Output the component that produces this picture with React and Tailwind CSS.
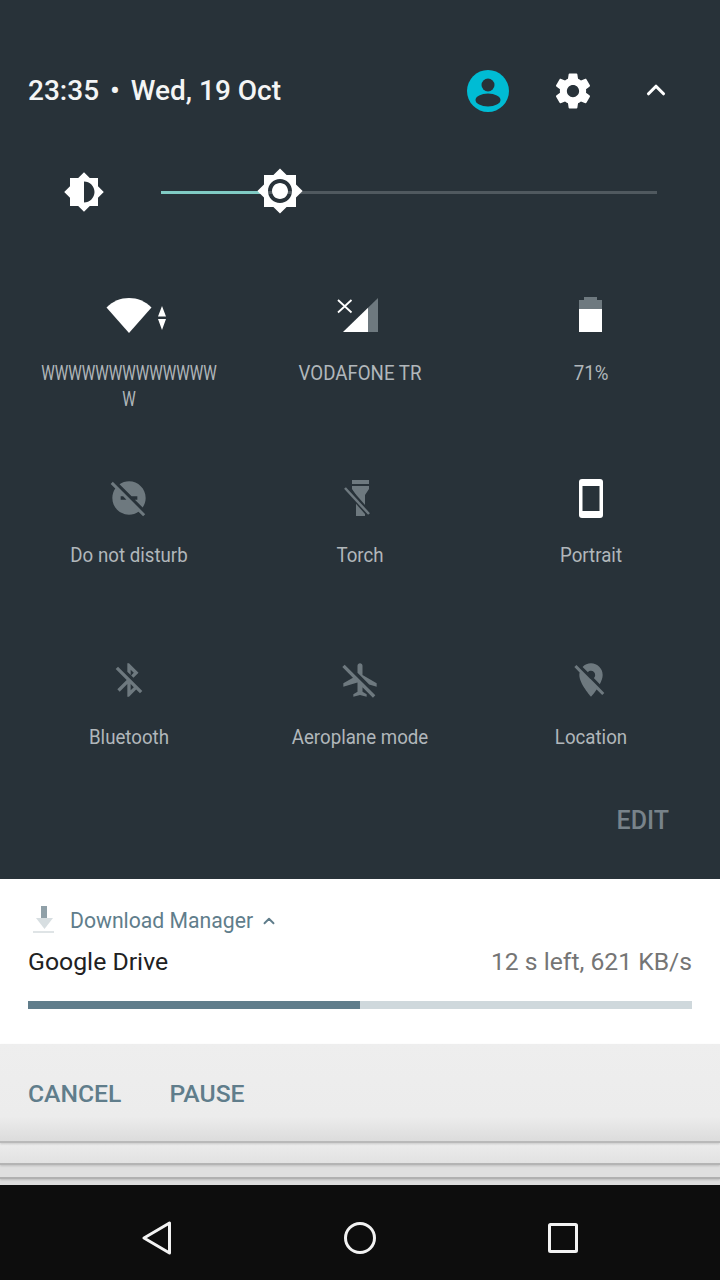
import { ChevronUp } from 'lucide-react';

const MUTED = '#6e797f';
const BG = '#283239';

function Tile({ icon, label, labelClass = 'w-[200px] scale-x-[0.89]' }) {
  return (
    <div className="flex flex-col items-center">
      <div className="h-[48px] w-[48px] flex items-center justify-center">{icon}</div>
      <p className={`mt-[20px] shrink-0 text-center text-[21px] leading-[26px] text-[#b1b7bb] break-all ${labelClass}`}>{label}</p>
    </div>
  );
}

const WifiIcon = () => (
  <div className="relative -mt-[2px]">
    <svg width="46" height="36" viewBox="0 0 46 36"><path d="M0.5 10.5C7 4 14.5 1 23 1s16 3 22.5 9.5L23 36z" fill="#fff" /></svg>
    <svg className="absolute left-[51px] top-[9px]" width="10" height="24" viewBox="0 0 10 24" fill="#fff"><path d="M5 0l4 10.5H1zM1 13h8L5 24z" /></svg>
  </div>
);

const SignalIcon = () => (
  <svg className="-mt-[2px] -ml-[4px] shrink-0" width="42" height="36" viewBox="0 0 42 36">
    <path d="M31 10.700L41 1v34H31z" fill="#6e797f" />
    <path d="M31 10.700V35H6z" fill="#fff" />
    <path d="M1 3L14.500 15.500M14.500 3L1 15.500" stroke="#fff" strokeWidth="1.800" />
  </svg>
);

const BatteryIcon = () => (
  <svg className="-mt-[2px]" width="23" height="36" viewBox="0 0 23 36">
    <path d="M5 0h13v3h5v9H0V3h5z" fill="#6e797f" />
    <path d="M0 12h23v23H0z" fill="#fff" />
  </svg>
);

const PortraitIcon = () => (
  <svg width="24" height="39" viewBox="0 0 24 39">
    <rect x="0" y="0" width="24" height="39" rx="3" fill="#fff" />
    <rect x="3.500" y="7" width="17" height="25" fill={BG} />
  </svg>
);

const TorchIcon = () => (
  <svg width="36" height="36" viewBox="0 0 36 36">
    <path d="M10 0h17v4H10zM10 6h17v3l-4 6v21h-9V15l-4-6z" fill={MUTED} />
    <path d="M5 9l22 25" stroke={BG} strokeWidth="6" />
    <path d="M3 8l24 26" stroke={MUTED} strokeWidth="2.500" />
  </svg>
);

const MatIcon = ({ d, size = 40, fill = MUTED }) => (
  <svg width={size} height={size} viewBox="0 0 24 24" fill={fill}><path d={d} /></svg>
);

const DND = 'M17 11v2h-1.46l4.68 4.68C21.34 16.07 22 14.11 22 12c0-5.52-4.48-10-10-10-2.11 0-4.07.66-5.68 1.78L13.54 11H17zM2.27 2.27L1 3.54l2.78 2.78C2.66 7.93 2 9.89 2 12c0 5.52 4.48 10 10 10 2.11 0 4.07-.66 5.68-1.78L20.46 23l1.27-1.27L11 11 2.27 2.27zM7 13v-2h1.46l2 2H7z';
const BLUETOOTH = 'M13 5.830l1.880 1.880-1.600 1.600 1.410 1.410 3.020-3.020L12 2h-1v5.030l2 2v-3.200zM5.410 4L4 5.410 10.590 12 5 17.590 6.410 19 11 14.410V22h1l4.290-4.290 2.300 2.290L20 18.590 5.410 4zM13 18.170v-3.760l1.880 1.880L13 18.170z';
const PLANE = 'M10.500 7.670V3.500c0-.83.67-1.500 1.500-1.500s1.500.67 1.500 1.500V9l8.500 5v2l-4.490-1.320-7.010-7.010zm9.280 14.940l1.410-1.410-7.690-7.700-3.940-3.940-6.750-6.750-1.420 1.410 6.380 6.380L2 14v2l8.500-2.500V19L8 20.500V22l4-1 4 1v-1.500L13.500 19v-2.670l6.280 6.280z';
const PIN = 'M12 6.500c1.380 0 2.500 1.120 2.500 2.500 0 .74-.33 1.390-.83 1.850l3.630 3.630c.98-1.860 1.700-3.800 1.700-5.480 0-3.870-3.130-7-7-7-1.980 0-3.760.83-5.040 2.150l3.190 3.190c.46-.52 1.110-.84 1.850-.84zm4.370 9.600l-4.630-4.630-.11-.11L3.270 3 2 4.270l3.180 3.180C5.070 7.950 5 8.470 5 9c0 5.250 7 13 7 13s1.670-1.850 3.380-4.350L18.730 21 20 19.730l-3.630-3.630z';
const GEAR = 'M19.430 12.980c.04-.32.07-.64.07-.98s-.03-.66-.07-.98l2.110-1.650c.19-.15.24-.42.12-.64l-2-3.460c-.12-.22-.39-.3-.61-.22l-2.490 1c-.52-.4-1.080-.73-1.690-.98l-.38-2.650C14.460 2.180 14.250 2 14 2h-4c-.25 0-.46.18-.49.42l-.38 2.650c-.61.25-1.170.59-1.690.98l-2.490-1c-.23-.09-.49 0-.61.22l-2 3.460c-.13.22-.07.49.12.64l2.110 1.650c-.04.32-.07.65-.07.98s.03.66.07.98l-2.110 1.650c-.19.15-.24.42-.12.64l2 3.460c.12.22.39.3.61.22l2.490-1c.52.4 1.080.73 1.690.98l.38 2.650c.03.24.24.42.49.42h4c.25 0 .46-.18.49-.42l.38-2.650c.61-.25 1.170-.59 1.690-.98l2.490 1c.23.09.49 0 .61-.22l2-3.460c.12-.22.07-.49-.12-.64l-2.110-1.650zM12 15.500c-1.930 0-3.500-1.570-3.500-3.500s1.570-3.500 3.500-3.500 3.500 1.570 3.500 3.500-1.570 3.500-3.500 3.500z';
const BRIGHT_MED = 'M20 15.310L23.310 12 20 8.690V4h-4.690L12 .69 8.690 4H4v4.690L.69 12 4 15.310V20h4.690L12 23.310 15.310 20H20v-4.690zM12 18V6c3.310 0 6 2.690 6 6s-2.690 6-6 6z';
const BRIGHT_HIGH = 'M20 8.690V4h-4.690L12 .69 8.690 4H4v4.690L.69 12 4 15.310V20h4.690L12 23.310 15.310 20H20v-4.690L23.310 12 20 8.690zM12 18c-3.310 0-6-2.690-6-6s2.690-6 6-6 6 2.690 6 6-2.690 6-6 6zm0-10c-2.210 0-4 1.790-4 4s1.790 4 4 4 4-1.790 4-4-1.790-4-4-4z';

export default function App() {
  return (
    <div className="w-[720px] h-[1280px] flex flex-col overflow-hidden font-['Roboto',sans-serif]">
      {/* quick settings */}
      <div className="h-[879px] bg-[#283239] flex flex-col">
        <div className="mt-[67px] h-[48px] pl-[28px] flex items-center">
          <span className="text-[28px] font-medium text-[#f4f5f5] flex-1 whitespace-pre">23:35 <span className="mx-[4px]">•</span> Wed, 19 Oct</span>
          <div className="w-[42px] h-[42px] rounded-full bg-[#00bcd4] flex items-center justify-center mr-[43px]">
            <svg width="42" height="42" viewBox="0 0 42 42" fill={BG}>
              <circle cx="21" cy="15" r="6.500" />
              <ellipse cx="21" cy="30" rx="12.500" ry="6.500" />
            </svg>
          </div>
          <div className="mr-[47px]"><MatIcon d={GEAR} size={42} fill="#fff" /></div>
          <ChevronUp size={30} color="#fff" strokeWidth={2.500} className="mr-[49px] -mt-[2px]" />
        </div>

        <div className="mt-[53px] h-[48px] flex items-center pl-[63px]">
          <MatIcon d={BRIGHT_MED} size={42} fill="#fff" />
          <div className="relative ml-[56px] w-[496px] h-[3px] bg-[#50595f]">
            <div className="h-full w-[100px] bg-[#80cbc4]" />
            <div className="absolute left-[95px] top-[-24px] w-[48px] h-[48px] flex items-center justify-center">
              <MatIcon d={BRIGHT_HIGH} size={48} fill="#fff" />
            </div>
          </div>
        </div>

        <div className="mt-[76px] px-[14px] grid grid-cols-3 auto-rows-[182px]">
          <Tile icon={<WifiIcon />} label="WWWWWWWWWWWWWW" labelClass="w-[246px] scale-x-[0.725]" />
          <Tile icon={<SignalIcon />} label="VODAFONE TR" />
          <Tile icon={<BatteryIcon />} label="71%" />
          <Tile icon={<MatIcon d={DND} />} label="Do not disturb" />
          <Tile icon={<TorchIcon />} label="Torch" />
          <Tile icon={<PortraitIcon />} label="Portrait" />
          <Tile icon={<MatIcon d={BLUETOOTH} />} label="Bluetooth" />
          <Tile icon={<MatIcon d={PLANE} />} label="Aeroplane mode" />
          <Tile icon={<MatIcon d={PIN} />} label="Location" />
        </div>

        <div className="mt-[-31px] pr-[51px] text-right text-[25px] leading-[28px] font-medium text-[#78838a]">EDIT</div>
      </div>

      {/* download notification */}
      <div className="h-[165px] bg-white px-[28px]">
        <div className="h-[30px] mt-[27px] flex items-center">
          <svg width="32" height="30" viewBox="0 0 32 30" className="shrink-0">
            <path d="M13 0h6v12h-6z" fill="#90a0a8" />
            <path d="M8 12h17l-8.500 11z" fill="#d7dee1" />
            <path d="M5 25h21v2H5z" fill="#dfe4e6" />
          </svg>
          <span className="ml-[10px] text-[21.2px] text-[#607d8b]">Download Manager</span>
          <ChevronUp size={18} color="#607d8b" strokeWidth={2.500} className="ml-[7px]" />
        </div>
        <div className="mt-[11px] flex items-center justify-between leading-[30px]">
          <span className="text-[24.8px] text-[#212121]">Google Drive</span>
          <span className="text-[24.7px] text-[#757575]">12 s left, 621 KB/s</span>
        </div>
        <div className="mt-[24px] h-[8px] bg-[#cfd8dc]">
          <div className="h-full w-[332px] bg-[#607d8b]" />
        </div>
      </div>

      {/* actions + stacked notifications */}
      <div className="relative z-30 h-[99px] bg-gradient-to-b from-[#eeeeee] via-[#ececec] via-75% to-[#dcdcdc] px-[28px] pt-[2px] flex items-center gap-[48px] border-b-2 border-[#b9b9b9] shadow-[0_1px_2px_rgba(0,0,0,0.15)]">
        <span className="text-[24.7px] font-medium text-[#607d8b]">CANCEL</span>
        <span className="text-[24.7px] font-medium text-[#607d8b]">PAUSE</span>
      </div>
      <div className="relative z-20 h-[22px] bg-gradient-to-b from-[#ececec] to-[#e2e2e2] border-b-2 border-[#b4b4b4] shadow-[0_1px_2px_rgba(0,0,0,0.15)]" />
      <div className="relative z-10 h-[14px] bg-[#dfdfdf] border-b-2 border-[#b0b0b0] shadow-[0_1px_2px_rgba(0,0,0,0.15)]" />
      <div className="h-[6px] bg-[#dcdcdc]" />

      {/* nav bar */}
      <div className="flex-1 bg-[#0d0d0d] flex items-center pt-[11px]">
        <svg className="ml-[142px]" width="30" height="34" viewBox="0 0 30 34" fill="none" stroke="#f2f2f2" strokeWidth="3" strokeLinejoin="round"><path d="M27.500 2v30L2 17z" /></svg>
        <svg className="ml-[171px]" width="34" height="34" viewBox="0 0 34 34" fill="none" stroke="#f2f2f2" strokeWidth="3"><circle cx="17" cy="17" r="14.500" /></svg>
        <svg className="ml-[171px]" width="30" height="30" viewBox="0 0 30 30" fill="none" stroke="#f2f2f2" strokeWidth="3" strokeLinejoin="round"><rect x="1.500" y="1.500" width="27" height="27" rx="1" /></svg>
      </div>
    </div>
  );
}
